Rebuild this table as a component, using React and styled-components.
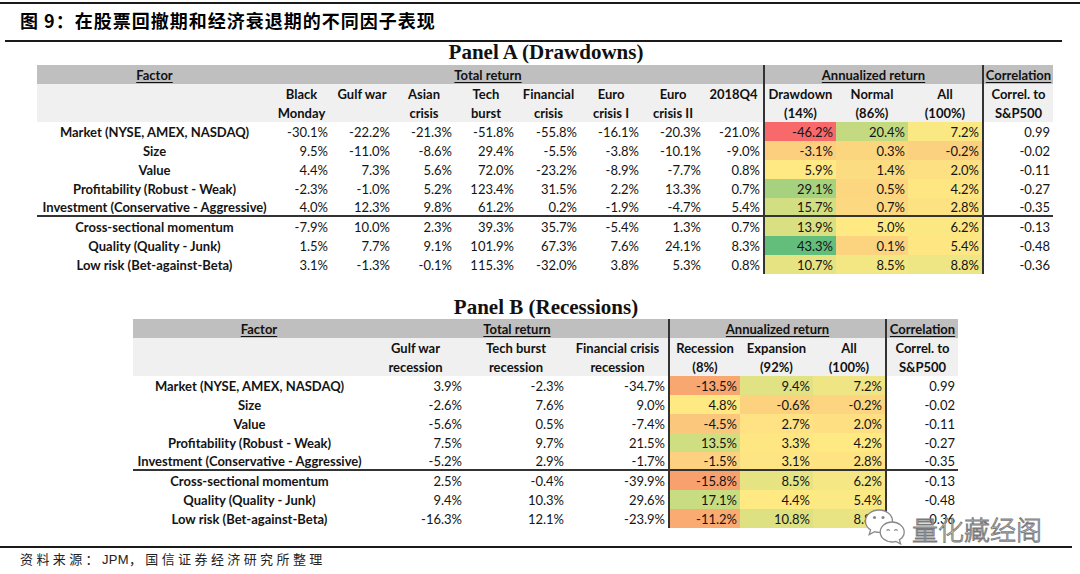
import React from 'react'
import styled, { createGlobalStyle } from 'styled-components'

const GlobalStyle = createGlobalStyle`
  html, body {
    margin: 0;
    padding: 0;
    background: #fff;
  }
  body {
    font-family: Lato, "Liberation Sans", sans-serif;
    color: #111;
  }
`

const Page = styled.div`
  position: relative;
  width: 1080px;
  height: 574px;
  overflow: hidden;
  display: flex;
  flex-direction: column;
  background: #fff;
`

const Rule = styled.div`
  height: ${p => p.$h || 2}px;
  margin-top: ${p => p.$top || 0}px;
  margin-left: ${p => p.$left || 0}px;
  margin-right: ${p => p.$right || 0}px;
  background: #1a1a1a;
`

const FigTitle = styled.div`
  margin-top: 2px;
  padding-left: 20px;
  height: 28px;
  line-height: 28px;
  font-family: "Noto Sans CJK SC", sans-serif;
  font-weight: 700;
  font-size: 18px;
  letter-spacing: 1px;
  color: #000;
`

const PanelTitle = styled.div`
  margin-top: ${p => p.$top || 0}px;
  text-align: center;
  padding-left: 12px;
  height: ${p => p.$h || 20}px;
  line-height: ${p => p.$h || 20}px;
  font-family: "Liberation Serif", serif;
  font-weight: 700;
  font-size: 21px;
  color: #111;
`

const Grid = styled.div`
  margin-top: ${p => p.$top || 0}px;
  margin-left: ${p => p.$left}px;
  display: grid;
  grid-template-columns: ${p => p.$cols.map(c => c + 'px').join(' ')};
  grid-template-rows: 19px 38px repeat(8, 19px);
  width: max-content;
`

const Cell = styled.div`
  box-sizing: border-box;
  display: flex;
  align-items: center;
  grid-column: span ${p => p.$span || 1};
  justify-content: ${p => p.$align === 'right' ? 'flex-end' : 'center'};
  padding: ${p => p.$align === 'right' ? '0 3px 0 0' : '0'};
  font-size: 13px;
  white-space: nowrap;
  border-left: ${p => p.$divider ? '2px solid #333' : 'none'};
`

const TopHead = styled(Cell)`
  background: #bfbfbf;
  font-weight: 700;
  padding-left: ${p => p.$shift || 0}px;
  span {
    text-decoration: underline;
    text-decoration-thickness: 1px;
    text-underline-offset: 2px;
  }
`

const SubHead = styled(Cell)`
  background: #f0f0f0;
  align-items: flex-start;
  padding-top: 1px;
  font-weight: 700;
  line-height: 19px;
  text-align: center;
  white-space: pre;
`

const Value = styled(Cell)`
  background: ${p => p.$bg || '#fff'};
  font-weight: ${p => p.$label ? 700 : 400};
  border-bottom: ${p => p.$rule ? '2px solid #333' : 'none'};
  padding-top: ${p => p.$rule ? '1px' : '0'};
  color: #141414;
`

const Source = styled.div`
  margin-top: 1px;
  padding-left: 20px;
  height: 20px;
  line-height: 20px;
  font-family: "Noto Sans CJK SC", sans-serif;
  font-size: 13px;
  color: #222;
`

const Spaced = styled.span`
  letter-spacing: 3.4px;
`

const Latin = styled.span`
  font-family: "Liberation Sans", sans-serif;
  font-size: 13px;
  letter-spacing: 0.3px;
`

const Watermark = styled.div`
  position: absolute;
  left: 864px;
  top: 506px;
  display: flex;
  align-items: center;
  gap: 6px;
`

const MarkText = styled.span`
  font-family: "Noto Sans CJK SC", sans-serif;
  font-size: 26px;
  font-weight: 300;
  color: rgba(255, 255, 255, 0.85);
  -webkit-text-stroke: 0.9px #7a7a7a;
  margin-top: 4px;
`

const panelA = {
  cols: [235, 59, 62, 62, 62, 63, 62, 62, 59, 73, 72, 74, 71],
  top: [
    { text: 'Factor', span: 1 },
    { text: 'Total return', span: 7 },
    { text: '', span: 1 },
    { text: 'Annualized return', span: 3, divider: true },
    { text: 'Correlation', span: 1, divider: true },
  ],
  sub: ['', 'Black\nMonday', 'Gulf war', 'Asian\ncrisis', 'Tech\nburst', 'Financial\ncrisis', 'Euro\ncrisis I', 'Euro\ncrisis II', '2018Q4', 'Drawdown\n(14%)', 'Normal\n(86%)', 'All\n(100%)', 'Correl. to\nS&P500'],
  dividers: [9, 12],
  heat: [9, 10, 11],
  rows: [
    ['Market (NYSE, AMEX, NASDAQ)', '-30.1%', '-22.2%', '-21.3%', '-51.8%', '-55.8%', '-16.1%', '-20.3%', '-21.0%', '-46.2%', '20.4%', '7.2%', '0.99'],
    ['Size', '9.5%', '-11.0%', '-8.6%', '29.4%', '-5.5%', '-3.8%', '-10.1%', '-9.0%', '-3.1%', '0.3%', '-0.2%', '-0.02'],
    ['Value', '4.4%', '7.3%', '5.6%', '72.0%', '-23.2%', '-8.9%', '-7.7%', '0.8%', '5.9%', '1.4%', '2.0%', '-0.11'],
    ['Profitability (Robust - Weak)', '-2.3%', '-1.0%', '5.2%', '123.4%', '31.5%', '2.2%', '13.3%', '0.7%', '29.1%', '0.5%', '4.2%', '-0.27'],
    ['Investment (Conservative - Aggressive)', '4.0%', '12.3%', '9.8%', '61.2%', '0.2%', '-1.9%', '-4.7%', '5.4%', '15.7%', '0.7%', '2.8%', '-0.35'],
    ['Cross-sectional momentum', '-7.9%', '10.0%', '2.3%', '39.3%', '35.7%', '-5.4%', '1.3%', '0.7%', '13.9%', '5.0%', '6.2%', '-0.13'],
    ['Quality (Quality - Junk)', '1.5%', '7.7%', '9.1%', '101.9%', '67.3%', '7.6%', '24.1%', '8.3%', '43.3%', '0.1%', '5.4%', '-0.48'],
    ['Low risk (Bet-against-Beta)', '3.1%', '-1.3%', '-0.1%', '115.3%', '-32.0%', '3.8%', '5.3%', '0.8%', '10.7%', '8.5%', '8.8%', '-0.36'],
  ],
  colors: [
    ['#f8696b', '#c3da81', '#fae883'],
    ['#fbcf7e', '#fcd67f', '#fbd07e'],
    ['#fee983', '#fcdc81', '#fde081'],
    ['#a6d17f', '#fcd780', '#fee683'],
    ['#d2de82', '#fcd880', '#fde282'],
    ['#d9e082', '#fee983', '#fbe883'],
    ['#63be7b', '#fcd37f', '#fee783'],
    ['#e6e383', '#f3e784', '#eee584'],
  ],
}

const panelB = {
  cols: [233, 99, 102, 101, 72, 73, 72, 73],
  top: [
    { text: 'Factor', span: 1, shift: 19 },
    { text: 'Total return', span: 3 },
    { text: 'Annualized return', span: 3, divider: true },
    { text: 'Correlation', span: 1, divider: true },
  ],
  sub: ['', 'Gulf war\nrecession', 'Tech burst\nrecession', 'Financial crisis\nrecession', 'Recession\n(8%)', 'Expansion\n(92%)', 'All\n(100%)', 'Correl. to\nS&P500'],
  dividers: [4, 7],
  heat: [4, 5, 6],
  rows: [
    ['Market (NYSE, AMEX, NASDAQ)', '3.9%', '-2.3%', '-34.7%', '-13.5%', '9.4%', '7.2%', '0.99'],
    ['Size', '-2.6%', '7.6%', '9.0%', '4.8%', '-0.6%', '-0.2%', '-0.02'],
    ['Value', '-5.6%', '0.5%', '-7.4%', '-4.5%', '2.7%', '2.0%', '-0.11'],
    ['Profitability (Robust - Weak)', '7.5%', '9.7%', '21.5%', '13.5%', '3.3%', '4.2%', '-0.27'],
    ['Investment (Conservative - Aggressive)', '-5.2%', '2.9%', '-1.7%', '-1.5%', '3.1%', '2.8%', '-0.35'],
    ['Cross-sectional momentum', '2.5%', '-0.4%', '-39.9%', '-15.8%', '8.5%', '6.2%', '-0.13'],
    ['Quality (Quality - Junk)', '9.4%', '10.3%', '29.6%', '17.1%', '4.4%', '5.4%', '-0.48'],
    ['Low risk (Bet-against-Beta)', '-16.3%', '12.1%', '-23.9%', '-11.2%', '10.8%', '8.8%', '-0.36'],
  ],
  colors: [
    ['#f8a770', '#e1e283', '#f0e584'],
    ['#fee983', '#fcd27f', '#fdd480'],
    ['#fbc77c', '#fee283', '#fedf82'],
    ['#d0de82', '#fee683', '#fee983'],
    ['#fdd17f', '#fee583', '#fee383'],
    ['#f8a16f', '#e6e383', '#f5e784'],
    ['#c8dc81', '#fee983', '#fbe983'],
    ['#f9ab72', '#dde182', '#e9e483'],
  ],
}

function Panel({ data, left, top }) {
  return (
    <Grid $cols={data.cols} $left={left} $top={top}>
      {data.top.map((h, i) => (
        <TopHead key={'t' + i} $span={h.span} $divider={h.divider} $shift={h.shift}>
          {h.text && <span>{h.text}</span>}
        </TopHead>
      ))}
      {data.sub.map((s, i) => (
        <SubHead key={'s' + i} $divider={data.dividers.includes(i)}>{s}</SubHead>
      ))}
      {data.rows.map((row, r) =>
        row.map((v, c) => {
          const heatIdx = data.heat.indexOf(c)
          return (
            <Value
              key={r + '-' + c}
              $label={c === 0}
              $align={c === 0 ? 'center' : 'right'}
              $divider={data.dividers.includes(c)}
              $bg={heatIdx >= 0 ? data.colors[r][heatIdx] : null}
              $rule={r === 4}
            >
              {v}
            </Value>
          )
        })
      )}
    </Grid>
  )
}

function WeChatIcon() {
  return (
    <svg width="42" height="38" viewBox="0 0 42 38">
      <path d="M15 2 C7.5 2 1.5 7 1.5 13.2 C1.5 16.8 3.5 19.8 6.6 21.8 L5.2 26.6 L10.6 23.6 C12 24.1 13.5 24.4 15 24.4 C22.5 24.4 28.5 19.4 28.5 13.2 C28.5 7 22.5 2 15 2 Z" fill="#fff" stroke="#8a8a8a" strokeWidth="1.3" />
      <circle cx="10.5" cy="9.5" r="1.6" fill="#8a8a8a" />
      <circle cx="19" cy="9.5" r="1.6" fill="#8a8a8a" />
      <path d="M28 14 C21.4 14 16.2 18.4 16.2 24 C16.2 29.6 21.4 34 28 34 C29.4 34 30.8 33.8 32 33.4 L36.6 36 L35.4 31.8 C38.4 30 40.2 27.2 40.2 24 C40.2 18.4 34.6 14 28 14 Z" fill="#fff" stroke="#8a8a8a" strokeWidth="1.3" />
      <path d="M22.6 22.6 Q24.2 20.8 25.8 22.6" fill="none" stroke="#8a8a8a" strokeWidth="1.2" />
      <path d="M30.4 22.6 Q32 20.8 33.6 22.6" fill="none" stroke="#8a8a8a" strokeWidth="1.2" />
    </svg>
  )
}

export default function App() {
  return (
    <Page>
      <GlobalStyle />
      <Rule $h={2} $top={2} />
      <FigTitle>图 9：在股票回撤期和经济衰退期的不同因子表现</FigTitle>
      <Rule $h={2} $top={6} $left={5} $right={18} />
      <PanelTitle $h={20}>Panel A (Drawdowns)</PanelTitle>
      <Panel data={panelA} left={37} top={3} />
      <PanelTitle $top={22} $h={22}>Panel B (Recessions)</PanelTitle>
      <Panel data={panelB} left={133} top={1} />
      <Rule $h={2} $top={18} $right={8} />
      <Source>
        <Spaced>资料来源：</Spaced>
        <Latin>JPM</Latin>
        <Spaced>，国信证券经济研究所整理</Spaced>
      </Source>
      <Watermark>
        <WeChatIcon />
        <MarkText>量化藏经阁</MarkText>
      </Watermark>
    </Page>
  )
}
